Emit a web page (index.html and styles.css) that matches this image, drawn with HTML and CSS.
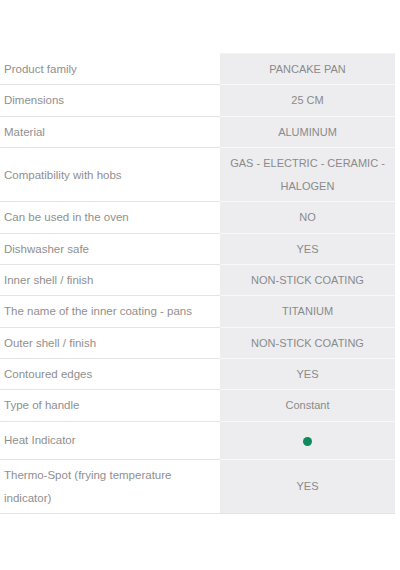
FILE: index.html
```html
<!DOCTYPE html>
<html lang="en">
<head>
    <meta charset="UTF-8">
    <meta name="viewport" content="width=device-width, initial-scale=1.0">
    <title>Pancake Pan - Specifications</title>
    <link rel="stylesheet" href="styles.css">
</head>
<body>

    <table class="specs">
        <tr>
            <td class="label">Product family</td>
            <td class="value">PANCAKE PAN</td>
        </tr>
        <tr>
            <td class="label">Dimensions</td>
            <td class="value">25 CM</td>
        </tr>
        <tr>
            <td class="label">Material</td>
            <td class="value">ALUMINUM</td>
        </tr>
        <tr>
            <td class="label">Compatibility with hobs</td>
            <td class="value">GAS - ELECTRIC - CERAMIC -<br>HALOGEN</td>
        </tr>
        <tr>
            <td class="label">Can be used in the oven</td>
            <td class="value">NO</td>
        </tr>
        <tr>
            <td class="label">Dishwasher safe</td>
            <td class="value">YES</td>
        </tr>
        <tr>
            <td class="label">Inner shell / finish</td>
            <td class="value">NON-STICK COATING</td>
        </tr>
        <tr>
            <td class="label">The name of the inner coating - pans</td>
            <td class="value">TITANIUM</td>
        </tr>
        <tr>
            <td class="label">Outer shell / finish</td>
            <td class="value">NON-STICK COATING</td>
        </tr>
        <tr>
            <td class="label">Contoured edges</td>
            <td class="value">YES</td>
        </tr>
        <tr>
            <td class="label">Type of handle</td>
            <td class="value">Constant</td>
        </tr>
        <tr class="tall">
            <td class="label">Heat Indicator</td>
            <td class="value"><span class="dot"></span></td>
        </tr>
        <tr>
            <td class="label">Thermo-Spot (frying temperature<br>indicator)</td>
            <td class="value">YES</td>
        </tr>
    </table>

</body>
</html>
```

FILE: styles.css
```css
body {
    font-family: "Liberation Sans", Arial, sans-serif;
    background-color: #fff;
    margin: 0;
    padding: 0;
}

.specs {
    width: 395px;
    margin-top: 53px;
    border-collapse: separate;
    border-spacing: 0;
    font-size: 11.5px;
    line-height: 23.3px;
    color: #8f8f8f;
}

.specs td {
    padding: 4px 0 3px;
    vertical-align: middle;
}

.label {
    width: 216px;
    padding-left: 4px !important;
    border-bottom: 1px solid #e4e4e4;
}

.value {
    background-color: #ededf0;
    text-align: center;
    font-size: 11px;
    color: #8a8a8a;
    border-bottom: 1px solid #f8f8fa;
}

.specs tr:first-child .value {
    border-top: 1px solid #f4f4f6;
}

.specs tr:last-child td {
    border-bottom: 1px solid #e4e4e4;
}

.tall td {
    height: 30px;
}

.dot {
    display: inline-block;
    width: 9px;
    height: 9px;
    border-radius: 50%;
    background-color: #0f8a5c;
    vertical-align: middle;
}
```
